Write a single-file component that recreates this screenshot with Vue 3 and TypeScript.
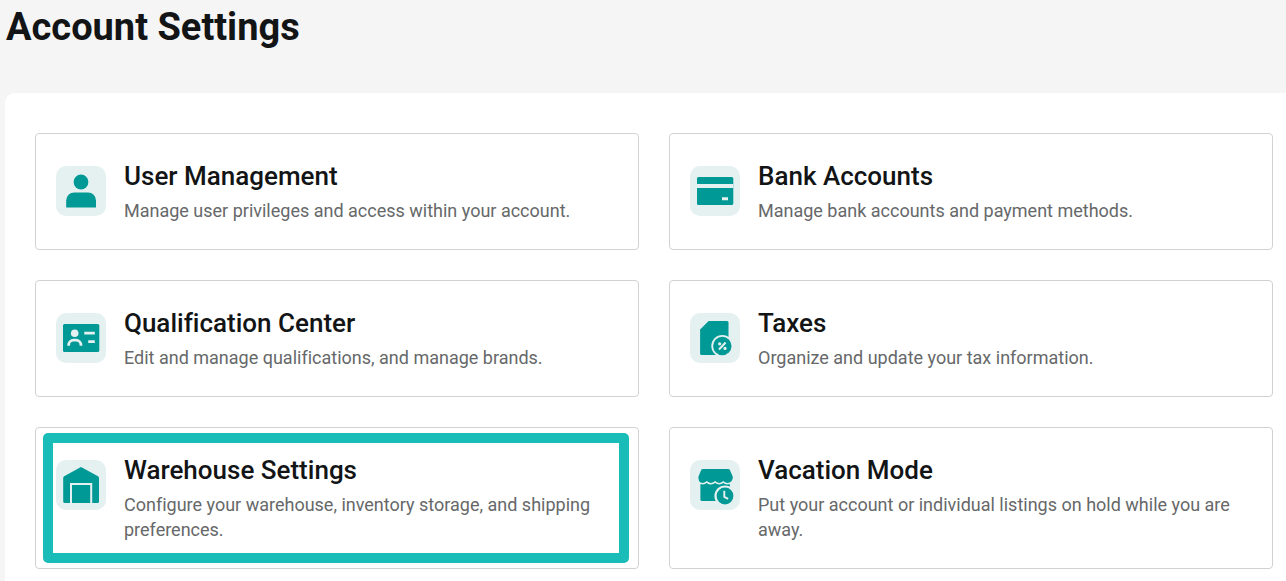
<script setup lang="ts">
type IconName = 'user' | 'bank' | 'qualification' | 'tax' | 'warehouse' | 'vacation'

interface SettingCard {
  icon: IconName
  title: string
  description: string
  highlighted?: boolean
}

const cards: SettingCard[] = [
  { icon: 'user', title: 'User Management', description: 'Manage user privileges and access within your account.' },
  { icon: 'bank', title: 'Bank Accounts', description: 'Manage bank accounts and payment methods.' },
  { icon: 'qualification', title: 'Qualification Center', description: 'Edit and manage qualifications, and manage brands.' },
  { icon: 'tax', title: 'Taxes', description: 'Organize and update your tax information.' },
  {
    icon: 'warehouse',
    title: 'Warehouse Settings',
    description: 'Configure your warehouse, inventory storage, and shipping preferences.',
    highlighted: true,
  },
  {
    icon: 'vacation',
    title: 'Vacation Mode',
    description: 'Put your account or individual listings on hold while you are away.',
  },
]
</script>

<template>
  <main class="page">
    <h1 class="page-title">Account Settings</h1>
    <section class="panel">
      <a
        v-for="card in cards"
        :key="card.icon"
        href="#"
        class="card"
        :class="{ highlighted: card.highlighted }"
      >
        <svg class="icon" viewBox="0 0 50 50" aria-hidden="true">
          <rect class="tile" width="50" height="50" rx="10" />
          <g v-if="card.icon === 'user'" class="solid">
            <circle cx="25" cy="16" r="7.4" />
            <path d="M10.2 41.5V34.5a8 8 0 0 1 8-8H32a8 8 0 0 1 8 8V41.5Z" />
          </g>
          <g v-else-if="card.icon === 'bank'">
            <rect class="solid" x="7" y="11" width="36.3" height="28" rx="1.6" />
            <path class="tile" d="M7 18h36.3v4H7zM32 31.2h6v3h-6z" />
          </g>
          <g v-else-if="card.icon === 'qualification'">
            <rect class="solid" x="7" y="11" width="36.3" height="28" rx="1.6" />
            <circle class="tile" cx="18.7" cy="20.2" r="3.8" />
            <path class="line" stroke-width="2.8" d="M12.6 32.8v-.6a5 5 0 0 1 5-5h2.4a5 5 0 0 1 5 5v.6" />
            <path class="tile" d="M28.3 18.7h10.5v2.8H28.3zM32.2 27.2h6.6V30h-6.6z" />
          </g>
          <g v-else-if="card.icon === 'tax'">
            <path class="solid" d="M18.6 8H37a1.5 1.5 0 0 1 1.5 1.5V42H11.6a1.5 1.5 0 0 1-1.5-1.5V16.5Z" />
            <circle class="tile" cx="32.3" cy="33" r="11" />
            <circle class="solid" cx="32.3" cy="33" r="9.2" />
            <path class="line" stroke-width="2" d="m29 36.5 6.6-7" />
            <circle class="tile" cx="29.7" cy="30.8" r="1.6" />
            <circle class="tile" cx="35" cy="35.4" r="1.6" />
          </g>
          <g v-else-if="card.icon === 'warehouse'">
            <path
              class="solid"
              d="M24 7.4a2 2 0 0 1 2 0L42 16.2a2 2 0 0 1 1 1.8V41.4a1.6 1.6 0 0 1-1.6 1.6H8.8a1.6 1.6 0 0 1-1.6-1.6V18a2 2 0 0 1 1-1.8Z"
            />
            <path class="line" stroke-width="2" d="M15 43V24h20.2v19" />
          </g>
          <g v-else>
            <path class="solid" d="M10.4 22.5H39.8V41H12a1.6 1.6 0 0 1-1.6-1.6Z" />
            <path
              class="awning"
              d="M12.6 9H38.400Q39.400 9 39.900 9.900L42.800 16.800c0 4-2.200 6.200-5.400 6.200-2.600 0-3.800-1.900-4-1.900-.5 0-1.600 1.900-4.100 1.900S25.600 21.100 25.100 21.100 23.500 23 21 23s-3.800-1.900-4.200-1.900-1.500 1.900-4 1.900C9.600 23 8.400 20.700 8.400 16.800L11.200 9.900Q11.600 9 12.600 9Z"
            />
            <circle class="tile" cx="35" cy="36" r="10.6" />
            <circle class="solid" cx="35" cy="36" r="8.4" />
            <path class="line" stroke-width="1.9" d="M34.300 30.800V36.800L38.200 38.800" />
          </g>
        </svg>
        <div class="text">
          <h2 class="title">{{ card.title }}</h2>
          <p class="description">{{ card.description }}</p>
        </div>
      </a>
    </section>
  </main>
</template>

<style>
body {
  margin: 0;
  background: #f5f5f5;
}
</style>

<style scoped>
.page {
  display: flex;
  flex-direction: column;
  box-sizing: border-box;
  min-height: 100vh;
  padding-left: 5px;
  font-family: Roboto, "Liberation Sans", sans-serif;
  font-variant-ligatures: none;
  color: #121415;
}

.page-title {
  margin: 0 0 39px;
  padding-left: 1px;
  font-size: 38px;
  line-height: 54px;
  font-weight: 700;
}

.panel {
  display: grid;
  flex: 1;
  grid-template-columns: repeat(2, minmax(0, 1fr));
  align-content: start;
  gap: 30px;
  padding: 40px 13px 12px 30px;
  border-top-left-radius: 10px;
  background: #fff;
}

.card {
  position: relative;
  display: flex;
  align-items: flex-start;
  gap: 18px;
  padding: 26px 20px;
  border: 1px solid #d1d3d3;
  border-radius: 4px;
  color: inherit;
  text-decoration: none;
}

.card.highlighted::after {
  content: "";
  position: absolute;
  inset: 5px 9px 5px 7px;
  border: 10px solid #19bcb7;
  border-radius: 5px;
  pointer-events: none;
}

.icon {
  flex: none;
  width: 50px;
  height: 50px;
  margin-top: 6px;
}

.tile {
  fill: #e5f1f1;
}

.solid {
  fill: #009995;
}

.awning {
  fill: #009995;
  stroke: #e5f1f1;
  stroke-width: 3;
  paint-order: stroke;
}

.line {
  fill: none;
  stroke: #e5f1f1;
}

.text {
  flex: 1;
  min-width: 0;
}

.title {
  margin: 0 0 6px;
  font-size: 26px;
  line-height: 32px;
  font-weight: 500;
}

.description {
  margin: 0;
  font-size: 18px;
  line-height: 25px;
  color: #666869;
}
</style>
